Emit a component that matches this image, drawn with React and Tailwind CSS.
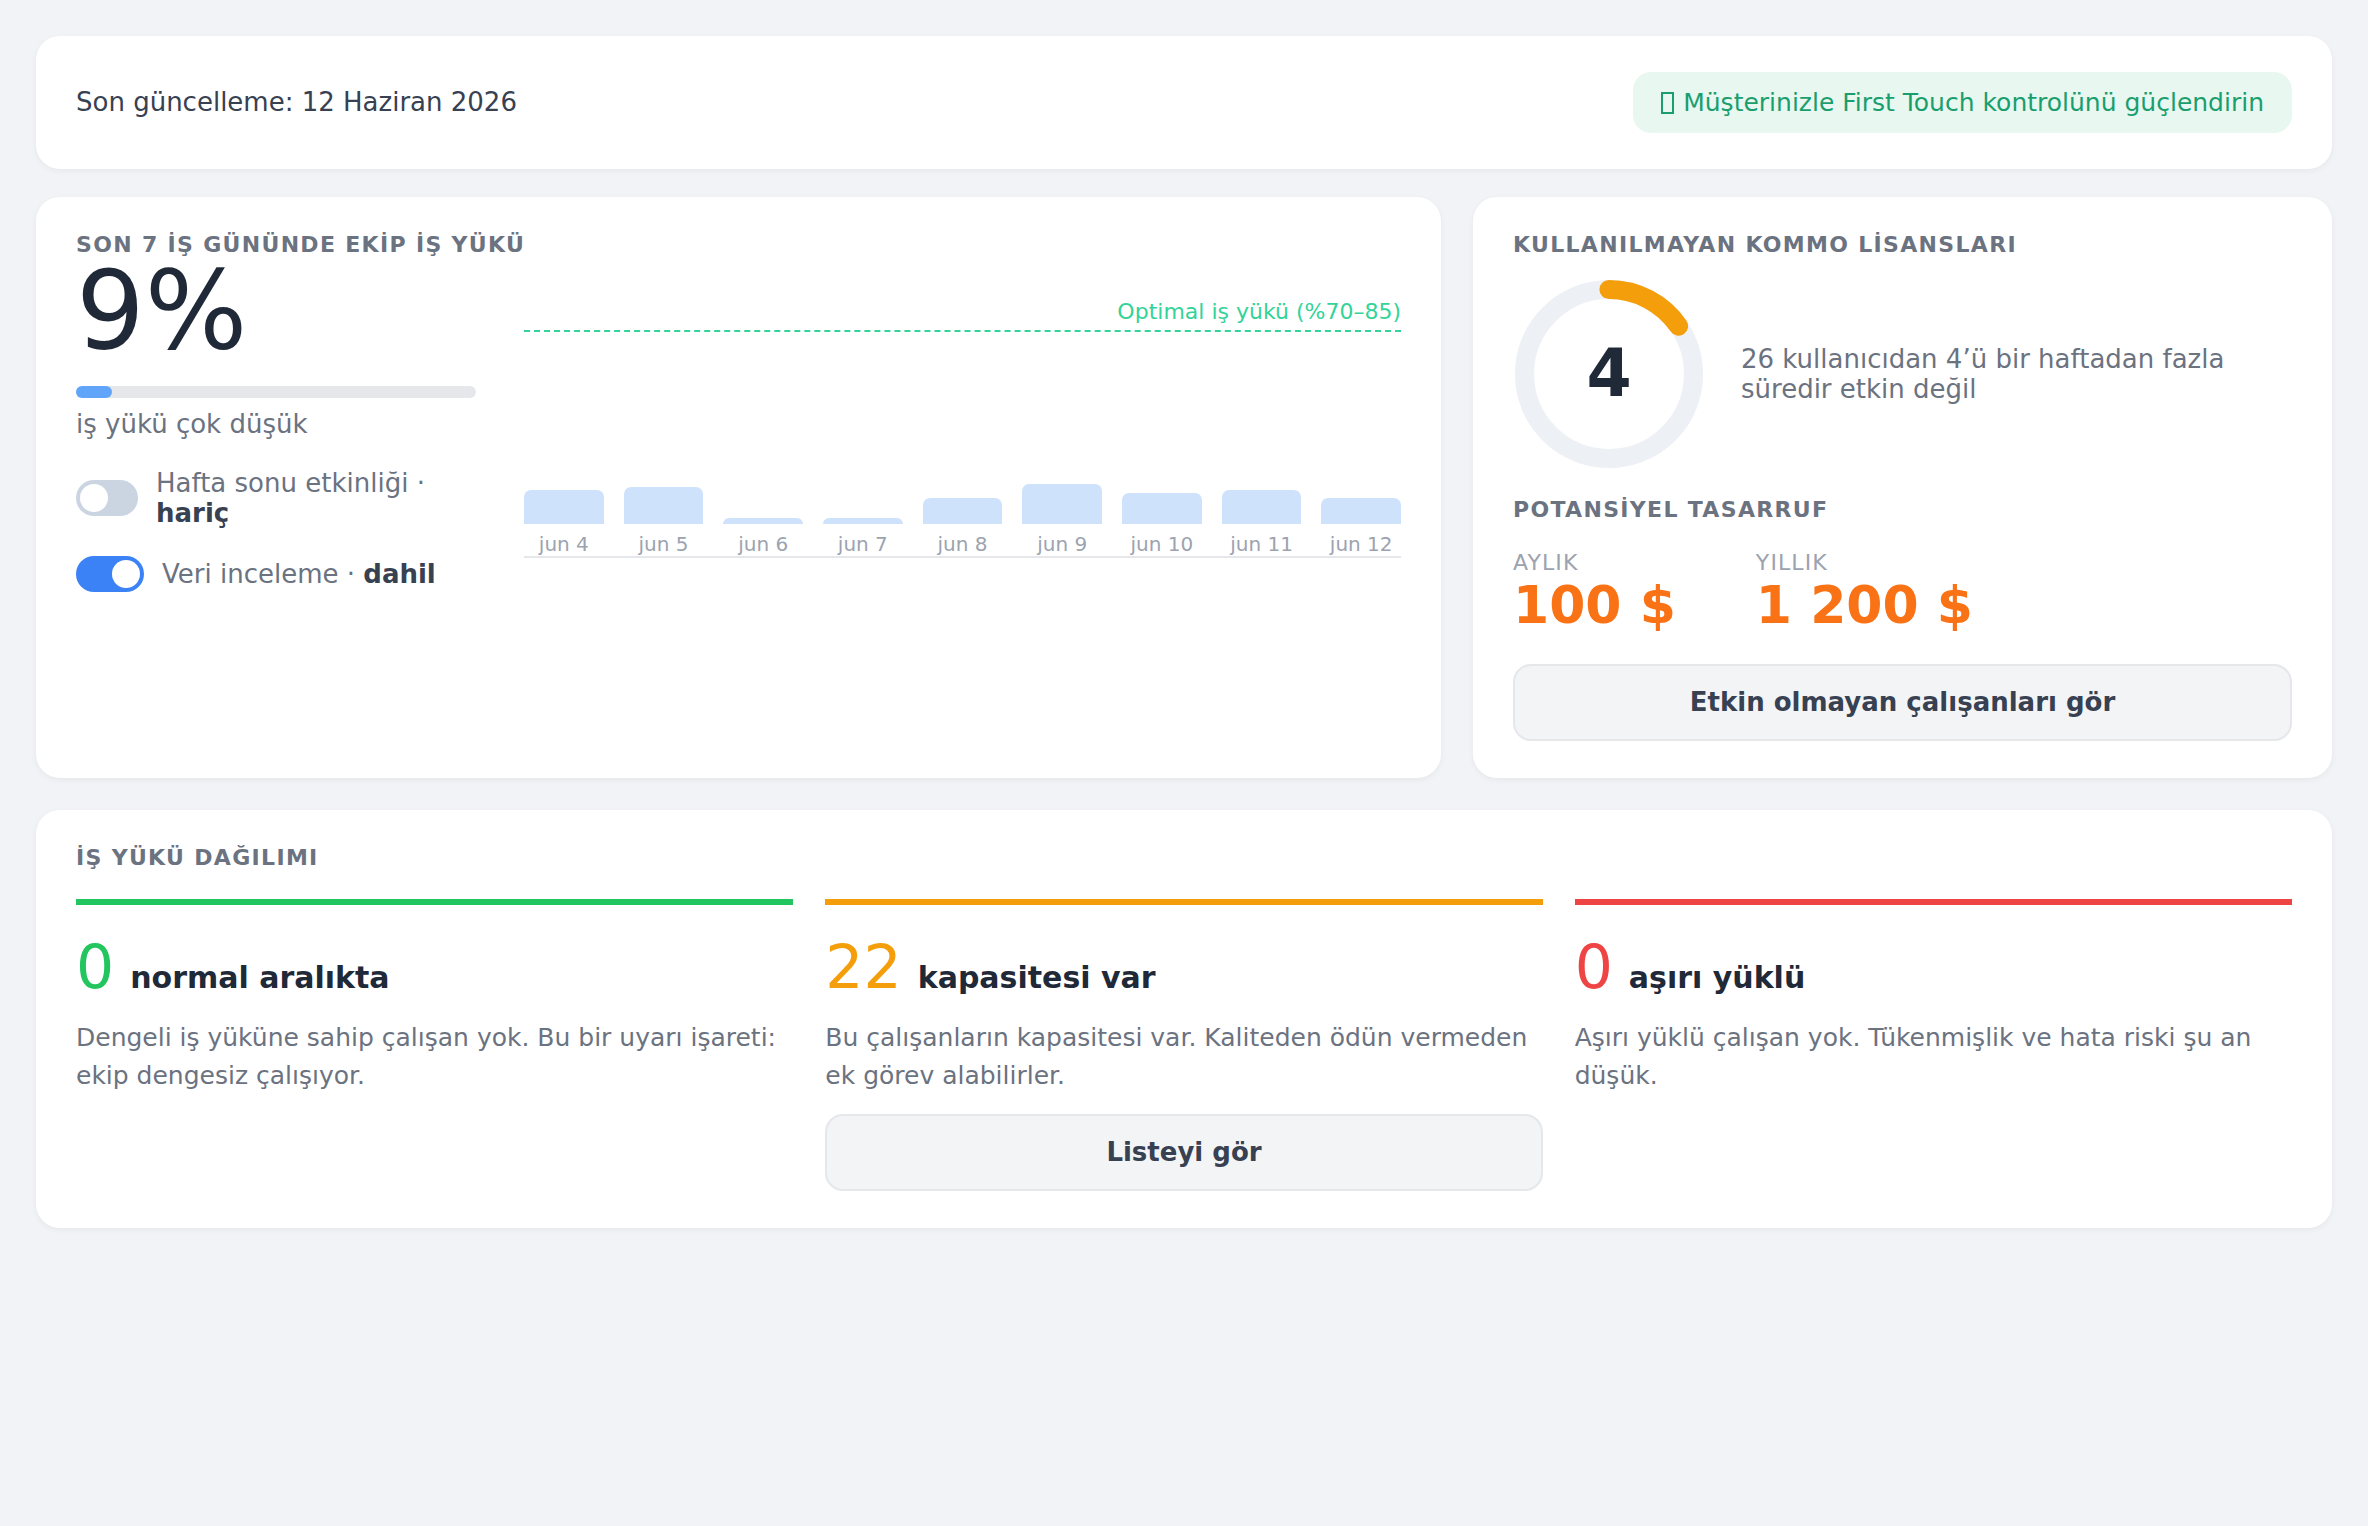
function Heading({ children }) {
  return <div className="text-[22px] leading-[24px] font-bold tracking-[0.06em] text-[#6b7280] whitespace-nowrap">{children}</div>;
}
function Toggle({ on }) {
  return (
    <span className={`flex h-[36px] shrink-0 items-center rounded-full px-[4px] ${on ? "w-[68px] justify-end bg-[#3b82f6]" : "w-[62px] justify-start bg-[#cbd5e1]"}`}>
      <span className="h-[28px] w-[28px] rounded-full bg-white" />
    </span>
  );
}
const bars = [["jun 4",34],["jun 5",37],["jun 6",6],["jun 7",6],["jun 8",26],["jun 9",40],["jun 10",31],["jun 11",34],["jun 12",26]];
function Btn({ children }) {
  return <button className="h-[77px] w-full rounded-[18px] border-[2px] border-[#e5e7eb] bg-[#f3f4f6] text-[26px] font-bold text-[#374151]">{children}</button>;
}
function Col({ color, num, label, text, btn }) {
  return (
    <div>
      <div className={`h-[6px] ${color.bg}`} />
      <div className="mt-[26px] flex items-baseline gap-[16px]">
        <span className={`text-[60px] leading-[72px] ${color.text}`}>{num}</span>
        <span className="text-[30px] font-bold text-[#1f2937]">{label}</span>
      </div>
      <p className="mt-[16px] text-[25px] leading-[38px] text-[#6b7280]">{text}</p>
      {btn && <div className="mt-[19px]"><Btn>{btn}</Btn></div>}
    </div>
  );
}
export default function App() {
  return (
    <div className="min-h-[1526px] bg-[#f1f3f7] p-[36px] font-['DejaVu_Sans',sans-serif]">
      <div className="flex items-center justify-between rounded-[24px] bg-white px-[40px] py-[36px] shadow-[0_2px_6px_rgba(0,0,0,0.05)]">
        <div className="text-[26px] text-[#374151]">Son güncelleme: 12 Haziran 2026</div>
        <div className="flex h-[61px] items-center rounded-[18px] bg-[#e8f8f1] px-[28px] text-[25px] text-[#1a9e6e]">
          <span className="mr-[9px] inline-block h-[22px] w-[13px] border-[2px] border-[#1a9e6e]" />
          Müşterinizle First Touch kontrolünü güçlendirin
        </div>
      </div>
      <div className="mt-[28px] grid grid-cols-[1fr_859px] gap-[32px]">
        <div className="h-[581px] rounded-[24px] bg-white px-[40px] py-[36px] shadow-[0_2px_6px_rgba(0,0,0,0.05)]">
          <div className="flex gap-[48px]">
            <div className="w-[400px] shrink-0">
              <Heading>SON 7 İŞ GÜNÜNDE EKİP İŞ YÜKÜ</Heading>
              <div className="text-[108px] leading-[108px] text-[#1f2937]">9%</div>
              <div className="mt-[21px] h-[12px] rounded-full bg-[#e5e7eb]"><div className="h-full w-[36px] rounded-full bg-[#60a5fa]" /></div>
              <div className="mt-[9px] text-[26px] leading-[34px] text-[#6b7280]">iş yükü çok düşük</div>
              <div className="mt-[27px] flex items-center gap-[18px]">
                <Toggle />
                <div className="flex-1 text-[26px] leading-[30px] text-[#6b7280]">Hafta sonu etkinliği · <b className="text-[#374151]">hariç</b></div>
              </div>
              <div className="mt-[28px] flex items-center gap-[18px]">
                <Toggle on />
                <div className="text-[26px] leading-[30px] text-[#6b7280]">Veri inceleme · <b className="text-[#374151]">dahil</b></div>
              </div>
            </div>
            <div className="flex-1">
              <div className="mt-[62px] border-b-[2px] border-dashed border-[#34d399] pb-[2px] text-right text-[22px] leading-[33px] text-[#34d399]">Optimal iş yükü (%70–85)</div>
              <div className="mt-[152px] border-b-[2px] border-[#e5e7eb]">
                <div className="flex h-[40px] items-end gap-[20px]">
                  {bars.map(([l, h]) => <div key={l} className="flex-1 rounded-t-[7px] bg-[#cfe2fb]" style={{ height: h }} />)}
                </div>
                <div className="flex gap-[20px] pt-[8px]">
                  {bars.map(([l]) => <div key={l} className="flex-1 text-center text-[20px] leading-[24px] text-[#9ca3af]">{l}</div>)}
                </div>
              </div>
            </div>
          </div>
        </div>
        <div className="rounded-[24px] bg-white px-[40px] py-[36px] shadow-[0_2px_6px_rgba(0,0,0,0.05)]">
          <Heading>KULLANILMAYAN KOMMO LİSANSLARI</Heading>
          <div className="mt-[21px] flex items-center gap-[36px]">
            <div className="relative h-[192px] w-[192px] shrink-0">
              <svg viewBox="0 0 100 100" className="h-full w-full">
                <circle cx="50" cy="50" r="44" fill="none" stroke="#edf0f5" strokeWidth="10" />
                <circle cx="50" cy="50" r="44" fill="none" stroke="#f59e0b" strokeWidth="10" strokeLinecap="round" strokeDasharray="42.5 276.5" transform="rotate(-90 50 50)" />
              </svg>
              <div className="absolute inset-0 flex items-center justify-center text-[65px] font-bold text-[#1f2937]">4</div>
            </div>
            <div className="text-[26px] leading-[30px] text-[#6b7280]">26 kullanıcıdan 4’ü bir haftadan fazla süredir etkin değil</div>
          </div>
          <div className="mt-[28px]"><Heading>POTANSİYEL TASARRUF</Heading></div>
          <div className="mt-[29px] flex gap-[80px]">
            <div>
              <div className="text-[22px] leading-[24px] tracking-[0.05em] text-[#9ca3af]">AYLIK</div>
              <div className="text-[52px] leading-[60px] font-bold text-[#f97316]">100 $</div>
            </div>
            <div>
              <div className="text-[22px] leading-[24px] tracking-[0.05em] text-[#9ca3af]">YILLIK</div>
              <div className="text-[52px] leading-[60px] font-bold text-[#f97316]">1 200 $</div>
            </div>
          </div>
          <div className="mt-[29px]"><Btn>Etkin olmayan çalışanları gör</Btn></div>
        </div>
      </div>
      <div className="mt-[32px] rounded-[24px] bg-white px-[40px] pt-[36px] pb-[37px] shadow-[0_2px_6px_rgba(0,0,0,0.05)]">
        <Heading>İŞ YÜKÜ DAĞILIMI</Heading>
        <div className="mt-[29px] grid grid-cols-3 gap-[32px]">
          <Col color={{ bg: "bg-[#22c55e]", text: "text-[#22c55e]" }} num="0" label="normal aralıkta" text="Dengeli iş yüküne sahip çalışan yok. Bu bir uyarı işareti: ekip dengesiz çalışıyor." />
          <Col color={{ bg: "bg-[#f59e0b]", text: "text-[#f59e0b]" }} num="22" label="kapasitesi var" text="Bu çalışanların kapasitesi var. Kaliteden ödün vermeden ek görev alabilirler." btn="Listeyi gör" />
          <Col color={{ bg: "bg-[#ef4444]", text: "text-[#ef4444]" }} num="0" label="aşırı yüklü" text="Aşırı yüklü çalışan yok. Tükenmişlik ve hata riski şu an düşük." />
        </div>
      </div>
    </div>
  );
}
